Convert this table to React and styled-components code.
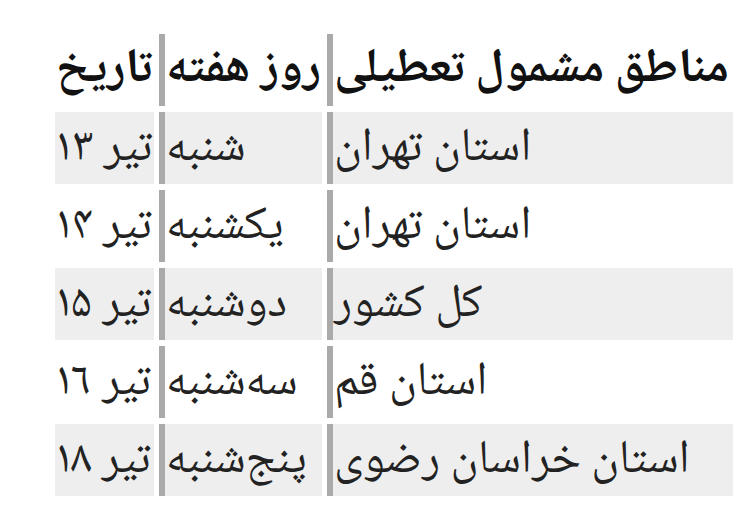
import React from "react";
import styled, { createGlobalStyle } from "styled-components";

const GlobalStyle = createGlobalStyle`
    html, body {
        margin: 0;
        padding: 0;
        background: #ffffff;
    }
    body {
        font-family: "Noto Naskh Arabic UI", "Noto Naskh Arabic", "Noto Sans Arabic", "DejaVu Sans", sans-serif;
        color: #1a1a1a;
    }
`;

const rows = [
    { region: "استان تهران", day: "شنبه", date: "تیر ۱۳" },
    { region: "استان تهران", day: "یکشنبه", date: "تیر ۱۴" },
    { region: "کل کشور", day: "دوشنبه", date: "تیر ۱۵" },
    { region: "استان قم", day: "سه‌شنبه", date: "تیر ۱۶" },
    { region: "استان خراسان رضوی", day: "پنج‌شنبه", date: "تیر ۱۸" },
];

const Page = styled.div`
    display: flex;
    justify-content: flex-end;
    padding: 28px 13px 0 0;
`;

const Table = styled.table`
    direction: rtl;
    border-collapse: separate;
    border-spacing: 5px 6px;
`;

const HeadCell = styled.th`
    width: ${(p) => p.$w}px;
    height: 72px;
    padding: 0 1px;
    text-align: left;
    font-size: 48px;
    font-weight: bold;
    line-height: 1;
    color: #111111;
    white-space: nowrap;
    border-left: ${(p) => (p.$bar ? "6px solid #aaaaaa" : "none")};
`;

const Cell = styled.td`
    width: ${(p) => p.$w}px;
    height: 72px;
    padding: 0 1px;
    text-align: left;
    font-size: 47px;
    line-height: 1;
    color: #222222;
    white-space: nowrap;
    background: ${(p) => (p.$shade ? "#eeeeee" : "transparent")};
    border-left: ${(p) => (p.$bar ? "6px solid #aaaaaa" : "none")};
`;

export default function App() {
    return (
        <>
            <GlobalStyle />
            <Page>
                <Table>
                    <thead>
                        <tr>
                            <HeadCell $w={398} $bar>مناطق مشمول تعطیلی</HeadCell>
                            <HeadCell $w={155} $bar>روز هفته</HeadCell>
                            <HeadCell $w={97}>تاریخ</HeadCell>
                        </tr>
                    </thead>
                    <tbody>
                        {rows.map((r, i) => (
                            <tr key={i}>
                                <Cell $w={398} $bar $shade={i % 2 === 0}>{r.region}</Cell>
                                <Cell $w={155} $bar $shade={i % 2 === 0}>{r.day}</Cell>
                                <Cell $w={97} $shade={i % 2 === 0}>{r.date}</Cell>
                            </tr>
                        ))}
                    </tbody>
                </Table>
            </Page>
        </>
    );
}
